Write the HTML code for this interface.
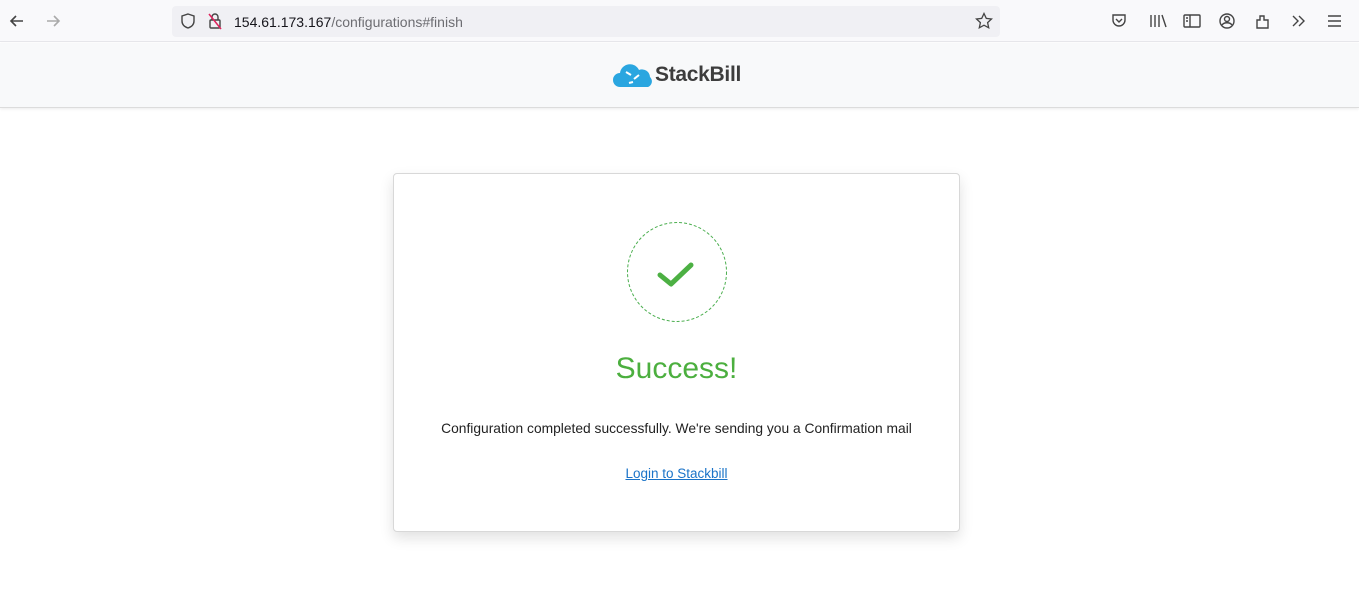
<!DOCTYPE html>
<html><head><meta charset="utf-8"><style>
*{margin:0;padding:0;box-sizing:border-box}
body{width:1359px;height:613px;overflow:hidden;background:#fff;font-family:"Liberation Sans",sans-serif;position:relative}
.tb{position:absolute;left:0;top:0;width:1359px;height:42px;background:#f9f9fb;border-bottom:1px solid #e6e6ea}
.url{position:absolute;left:172px;top:6px;width:828px;height:31px;background:#f0f0f4;border-radius:4px}
.url span{position:absolute;left:62px;top:8px;font-size:14px;color:#15141a}
.url span i{font-style:normal;color:#6d6d72}
svg{position:absolute}
.hd{position:absolute;left:0;top:43px;width:1359px;height:65px;background:#f8f9fa;border-bottom:1px solid #dcdcdc;box-shadow:0 1px 3px rgba(0,0,0,.08)}
.logo{position:absolute;left:655px;top:20px;font-size:21px;font-weight:bold;color:#3d3d3d;letter-spacing:-0.3px}
.card{position:absolute;left:393px;top:173px;width:567px;height:359px;border:1px solid #d8d8d8;border-radius:4px;box-shadow:0 6px 14px rgba(0,0,0,.12);background:#fff}
.succ{position:absolute;left:0;width:100%;top:178px;text-align:center;font-size:30px;color:#4caf3f}
.msg{position:absolute;left:0;width:100%;top:247px;text-align:center;font-size:13.8px;color:#222}
.lnk{position:absolute;left:0;width:100%;top:292px;text-align:center;font-size:13.5px;color:#1a73c8;text-decoration:underline}
</style></head><body>
<div class="tb">
<svg width="20" height="20" style="left:7px;top:11px" viewBox="0 0 20 20"><path d="M16 10H4M9 5L4 10l5 5" stroke="#444" stroke-width="1.6" fill="none"/></svg>
<svg width="20" height="20" style="left:43px;top:11px" viewBox="0 0 20 20"><path d="M4 10h12M11 5l5 5-5 5" stroke="#aaa" stroke-width="1.6" fill="none"/></svg>
<div class="url">
<svg width="18" height="18" style="left:7px;top:6px" viewBox="0 0 18 18"><path d="M9 2l6 2v5c0 4-3 6-6 7-3-1-6-3-6-7V4z" stroke="#444" stroke-width="1.4" fill="none"/></svg>
<svg width="18" height="18" style="left:34px;top:6px" viewBox="0 0 18 18"><rect x="4" y="8" width="10" height="8" rx="1" stroke="#444" stroke-width="1.4" fill="none"/><path d="M6 8V5a3 3 0 016 0v3" stroke="#444" stroke-width="1.4" fill="none"/><path d="M3 2l12 15" stroke="#e0245e" stroke-width="1.5"/></svg>
<span>154.61.173.167<i>/configurations#finish</i></span>
<svg width="18" height="18" style="left:803px;top:6px" viewBox="0 0 18 18"><path d="M9 1.5l2.3 4.9 5.2.6-3.9 3.6 1.1 5.2L9 13.2l-4.7 2.6 1.1-5.2L1.5 7l5.2-.6z" stroke="#444" stroke-width="1.3" fill="none"/></svg>
</div>
<svg width="300" height="20" style="left:1105px;top:11px" viewBox="0 0 300 20" fill="none" stroke="#444" stroke-width="1.4">
<path d="M8 4h12v5a6 6 0 01-12 0z"/><path d="M11 8l3 3 3-3"/>
<path d="M46 4v12M50 4v12M54 4v12M57 4l4 12"/>
<rect x="79" y="4" width="16" height="12" rx="1"/><path d="M85 4v12M81 7h2M81 10h2"/>
<circle cx="122" cy="10" r="7"/><circle cx="122" cy="8" r="2.5"/><path d="M117 14c2-3 8-3 10 0"/>
<path d="M152 17V9h3V5h4v4h4v8z"/>
<path d="M188 5l5 5-5 5M194 5l5 5-5 5"/>
<path d="M223 5h13M223 10h13M223 15h13"/>
</svg>
</div>
<div class="hd">
<svg width="44" height="30" style="left:612px;top:16px" viewBox="0 0 44 30"><path d="M8 28a7 7 0 010-14 10 10 0 0119-3 8 8 0 0111 7 6 6 0 01-2 10z" fill="#2aa6e0"/><path d="M14 13l5 3M22 20l5-4M17 24l4-1" stroke="#fff" stroke-width="2"/></svg>
<div class="logo">StackBill</div>
</div>
<div class="card">
<svg width="104" height="104" style="left:231px;top:46px" viewBox="0 0 104 104"><circle cx="52" cy="52" r="49.5" stroke="#4caf50" stroke-width="1" stroke-dasharray="3 2" fill="none"/><path d="M35 55l11 9 20-19" stroke="#4cb043" stroke-width="5" stroke-linecap="round" stroke-linejoin="round" fill="none"/></svg>
<div class="succ">Success!</div>
<div class="msg">Configuration completed successfully. We're sending you a Confirmation mail</div>
<div class="lnk">Login to Stackbill</div>
</div>
</body></html>
